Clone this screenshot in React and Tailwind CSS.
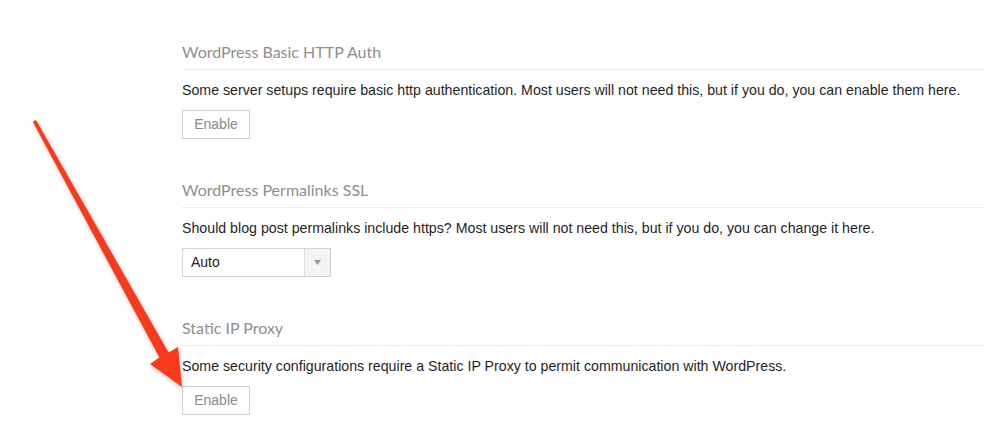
import React from "react";

const sections = [
  {
    title: "WordPress Basic HTTP Auth",
    text: "Some server setups require basic http authentication. Most users will not need this, but if you do, you can enable them here.",
    control: "button",
  },
  {
    title: "WordPress Permalinks SSL",
    text: "Should blog post permalinks include https? Most users will not need this, but if you do, you can change it here.",
    control: "select",
  },
  {
    title: "Static IP Proxy",
    text: "Some security configurations require a Static IP Proxy to permit communication with WordPress.",
    control: "button",
  },
];

const EnableButton = () => (
  <button className="h-[29px] w-[68px] border border-[#cfcfcf] bg-white text-[14px] text-[#8a8a8a] font-['Liberation_Sans',Arial,sans-serif]">
    Enable
  </button>
);

const AutoSelect = () => (
  <div className="flex h-[29px] w-[149px] border border-[#d2d2d2] bg-white">
    <div className="flex flex-1 items-center pl-[8px] text-[14px] text-[#222] font-['Liberation_Sans',Arial,sans-serif]">
      Auto
    </div>
    <div className="flex w-[26px] items-center justify-center border-l border-[#dedede] bg-[#f4f4f4]">
      <svg width="7" height="5" viewBox="0 0 7 5">
        <path d="M0 0 L7 0 L3.5 5 Z" fill="#9a9a9a" />
      </svg>
    </div>
  </div>
);

export default function App() {
  return (
    <div className="relative min-h-[446px] w-full overflow-hidden bg-white">
      <div className="flex flex-col gap-[39px] pl-[182px] pt-[40px]">
        {sections.map((s) => (
          <div key={s.title} className="flex flex-col">
            <div className="h-[30px] border-b border-[#ececec] pb-[5px] text-[16px] leading-[24px] text-[#8e8e8e] font-['Lato',sans-serif]">
              {s.title}
            </div>
            <p className="mt-[10px] h-[20px] whitespace-nowrap text-[14.2px] leading-[20px] text-[#1f1f1f] font-['Liberation_Sans',Arial,sans-serif]">
              {s.text}
            </p>
            <div className="mt-[10px]">
              {s.control === "button" ? <EnableButton /> : <AutoSelect />}
            </div>
          </div>
        ))}
      </div>

      {/* red annotation arrow */}
      <svg className="pointer-events-none absolute left-0 top-0" width="984" height="446" viewBox="0 0 984 446">
        <defs>
          <filter id="sh" x="-20%" y="-20%" width="140%" height="140%">
            <feDropShadow dx="1" dy="2" stdDeviation="2" floodColor="#000" floodOpacity="0.25" />
          </filter>
        </defs>
        <g filter="url(#sh)">
          <polygon
            points="36.6,121.1 168.6,352.4 178,347 182,387 150,364 159.4,357.6 33.4,122.9"
            fill="#f83a1c"
          />
          <circle cx="35" cy="122" r="1.8" fill="#f83a1c" />
        </g>
      </svg>
    </div>
  );
}
